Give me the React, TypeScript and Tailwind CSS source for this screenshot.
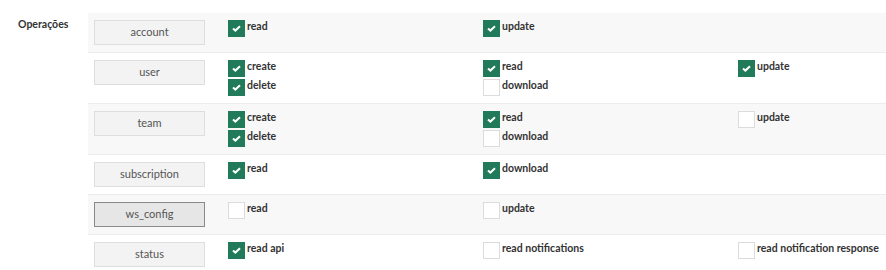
const ROWS: { name: string; focused?: boolean; ops: [string, boolean][] }[] = [
  { name: "account", ops: [["read", true], ["update", true]] },
  {
    name: "user",
    ops: [["create", true], ["read", true], ["update", true], ["delete", true], ["download", false]],
  },
  {
    name: "team",
    ops: [["create", true], ["read", true], ["update", false], ["delete", true], ["download", false]],
  },
  { name: "subscription", ops: [["read", true], ["download", true]] },
  { name: "ws_config", focused: true, ops: [["read", false], ["update", false]] },
  {
    name: "status",
    ops: [["read api", true], ["read notifications", false], ["read notification response", false]],
  },
];

function Check({ on }: { on: boolean }) {
  return on ? (
    <span className="flex h-[17px] w-[17px] shrink-0 items-center justify-center bg-[#217a5a]">
      <svg width="9" height="7" viewBox="0 0 9 7" fill="none">
        <path d="M1 3.4 3.4 5.6 8 1.3" stroke="#fff" strokeWidth="2" />
      </svg>
    </span>
  ) : (
    <span className="h-[17px] w-[17px] shrink-0 border border-[#dcdcdc] bg-white" />
  );
}

export default function App() {
  return (
    <div className="flex h-[270px] w-[886px] overflow-hidden bg-white pt-[13px] font-['Lato',sans-serif] text-[11px]">
      <div className="w-[88px] shrink-0 pl-[18px] pt-[4px] text-[10.5px] font-bold text-[#333]">Operações</div>
      <div className="flex-1">
        {ROWS.map((row, i) => (
          <div
            key={row.name}
            className={`flex border-t border-[#ececec] py-[7px] first:border-t-0 ${
              i % 2 === 0 ? "bg-[#f8f8f8]" : "bg-white"
            }`}
          >
            <div className="w-[140px] shrink-0 pl-[6px]">
              <div
                className={`flex h-[25px] w-[111px] items-center justify-center border text-[#555] ${
                  row.focused ? "border-[#8a8a8a] bg-[#e6e6e6]" : "border-[#dedede] bg-[#f3f3f3]"
                }`}
              >
                {row.name}
              </div>
            </div>
            <div className="grid grid-cols-[255px_255px_1fr] gap-y-[2px]">
              {row.ops.map(([label, on]) => (
                <div key={label} className="flex items-start gap-[2px]">
                  <Check on={on} />
                  <span className="text-[10.5px] font-bold leading-[13px] text-[#333]">{label}</span>
                </div>
              ))}
            </div>
          </div>
        ))}
      </div>
    </div>
  );
}
